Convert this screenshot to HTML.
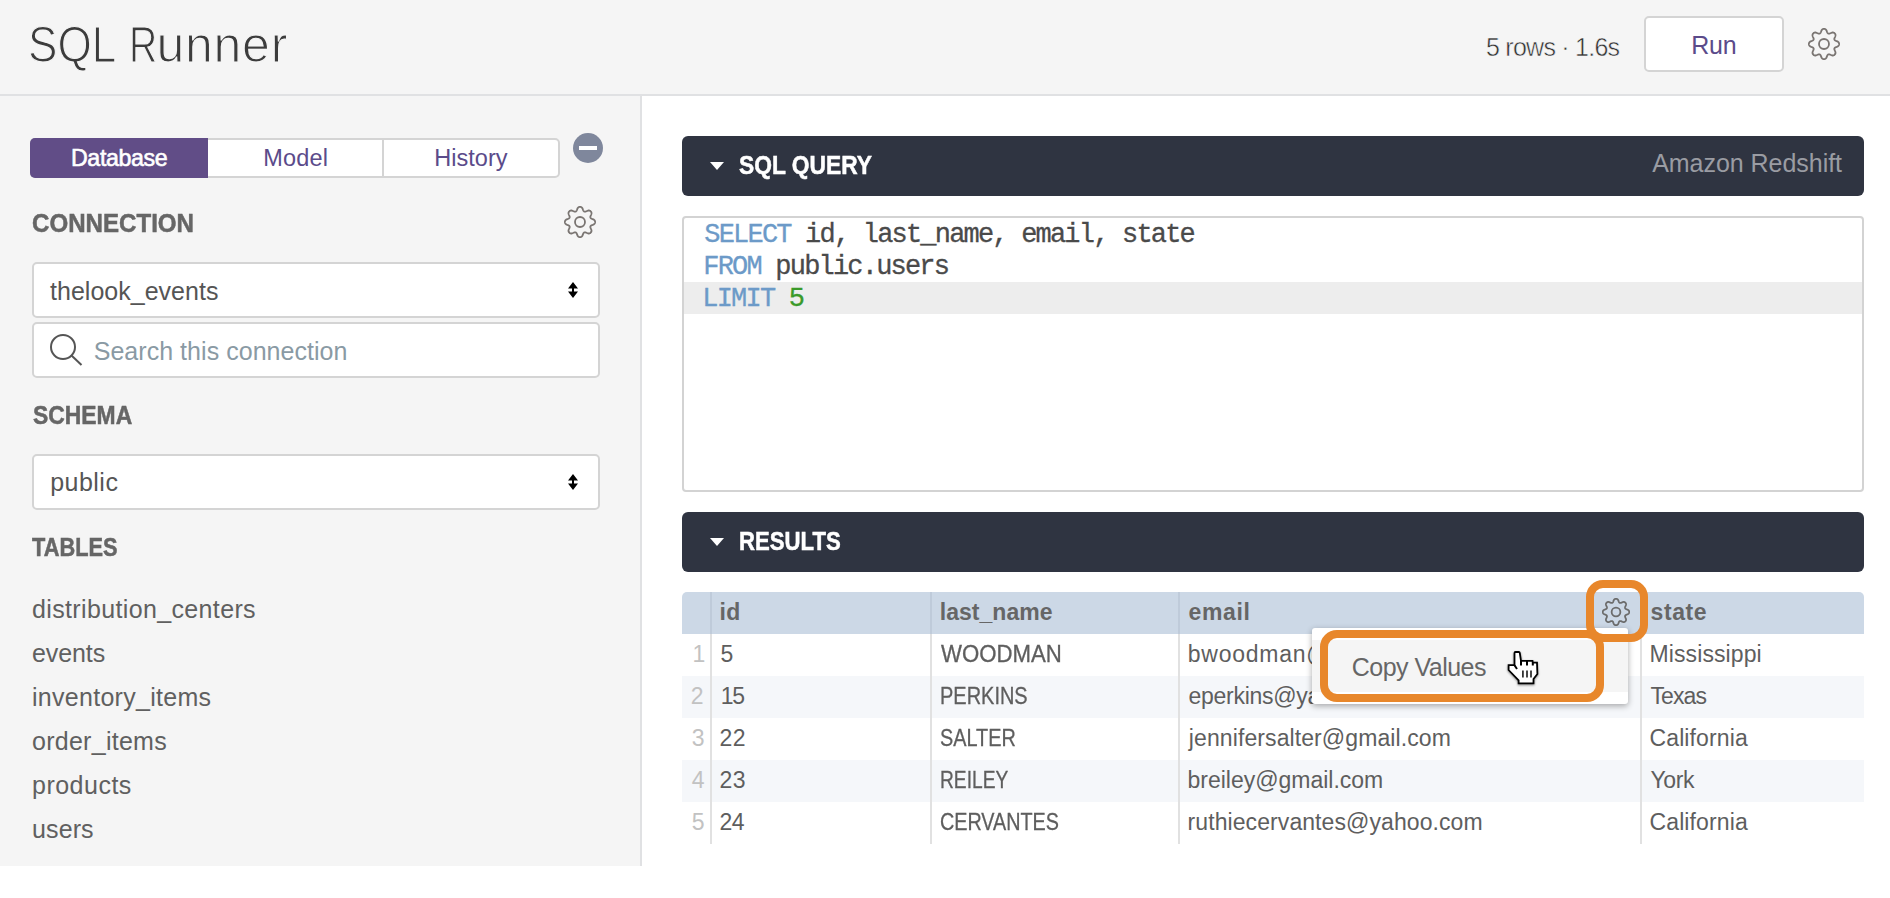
<!DOCTYPE html>
<html>
<head>
<meta charset="utf-8">
<title>SQL Runner</title>
<style>
*{box-sizing:border-box;margin:0;padding:0}
html,body{width:1890px;height:898px;overflow:hidden;background:#fff}
body{font-family:"Liberation Sans",sans-serif;color:#555;position:relative}
.abs{position:absolute}
.t{position:absolute;white-space:nowrap;line-height:1}
#hdr{left:0;top:0;width:1890px;height:96px;background:#f5f5f5;border-bottom:2px solid #e0e1e3}
#side{left:0;top:96px;width:642px;height:770px;background:#f5f5f5;border-right:2px solid #e0e1e3}
.box{position:absolute;background:#fff;border:2px solid #d4d4d4;border-radius:5px}
.bar{position:absolute;left:682px;width:1182px;height:60px;background:#2f3441;border-radius:6px}
.tri{position:absolute;left:28px;width:0;height:0;border-left:7px solid transparent;border-right:7px solid transparent;border-top:8px solid #fff}
.row{position:absolute;left:682px;width:1182px;height:42px}
.sep{position:absolute;top:634px;width:2px;height:210px;background:#e1e1e1}
.seph{position:absolute;top:592px;width:2px;height:42px;background:#bfcbda}
.kw{color:#6c9ac8}
.nm{color:#3a9a2a}
</style>
</head>
<body>

<!-- HEADER -->
<div id="hdr" class="abs"></div>
<div class="box" style="left:1644px;top:16px;width:140px;height:56px"></div>
<svg class="abs gear" style="left:1808px;top:28px" width="32" height="32" viewBox="0 0 32 32"><g fill="none" stroke="#7a7572" stroke-width="1.8" stroke-linejoin="round"><path d="M16.00 0.90 L16.37 0.92 L16.74 0.98 L17.10 1.09 L17.45 1.26 L17.79 1.51 L18.10 1.84 L18.38 2.27 L18.63 2.77 L18.85 3.32 L19.04 3.85 L19.23 4.32 L19.42 4.71 L19.63 5.02 L19.85 5.25 L20.08 5.43 L20.32 5.56 L20.59 5.64 L20.88 5.68 L21.20 5.67 L21.56 5.59 L21.97 5.46 L22.44 5.26 L22.95 5.02 L23.49 4.79 L24.03 4.60 L24.53 4.50 L24.99 4.49 L25.40 4.55 L25.76 4.68 L26.10 4.86 L26.40 5.07 L26.68 5.32 L26.93 5.60 L27.14 5.90 L27.32 6.24 L27.45 6.60 L27.51 7.01 L27.50 7.47 L27.40 7.97 L27.21 8.51 L26.98 9.05 L26.74 9.56 L26.54 10.03 L26.41 10.44 L26.33 10.80 L26.32 11.12 L26.36 11.41 L26.44 11.68 L26.57 11.92 L26.75 12.15 L26.98 12.37 L27.29 12.58 L27.68 12.77 L28.15 12.96 L28.68 13.15 L29.23 13.37 L29.73 13.62 L30.16 13.90 L30.49 14.21 L30.74 14.55 L30.91 14.90 L31.02 15.26 L31.08 15.63 L31.10 16.00 L31.08 16.37 L31.02 16.74 L30.91 17.10 L30.74 17.45 L30.49 17.79 L30.16 18.10 L29.73 18.38 L29.23 18.63 L28.68 18.85 L28.15 19.04 L27.68 19.23 L27.29 19.42 L26.98 19.63 L26.75 19.85 L26.57 20.08 L26.44 20.32 L26.36 20.59 L26.32 20.88 L26.33 21.20 L26.41 21.56 L26.54 21.97 L26.74 22.44 L26.98 22.95 L27.21 23.49 L27.40 24.03 L27.50 24.53 L27.51 24.99 L27.45 25.40 L27.32 25.76 L27.14 26.10 L26.93 26.40 L26.68 26.68 L26.40 26.93 L26.10 27.14 L25.76 27.32 L25.40 27.45 L24.99 27.51 L24.53 27.50 L24.03 27.40 L23.49 27.21 L22.95 26.98 L22.44 26.74 L21.97 26.54 L21.56 26.41 L21.20 26.33 L20.88 26.32 L20.59 26.36 L20.32 26.44 L20.08 26.57 L19.85 26.75 L19.63 26.98 L19.42 27.29 L19.23 27.68 L19.04 28.15 L18.85 28.68 L18.63 29.23 L18.38 29.73 L18.10 30.16 L17.79 30.49 L17.45 30.74 L17.10 30.91 L16.74 31.02 L16.37 31.08 L16.00 31.10 L15.63 31.08 L15.26 31.02 L14.90 30.91 L14.55 30.74 L14.21 30.49 L13.90 30.16 L13.62 29.73 L13.37 29.23 L13.15 28.68 L12.96 28.15 L12.77 27.68 L12.58 27.29 L12.37 26.98 L12.15 26.75 L11.92 26.57 L11.68 26.44 L11.41 26.36 L11.12 26.32 L10.80 26.33 L10.44 26.41 L10.03 26.54 L9.56 26.74 L9.05 26.98 L8.51 27.21 L7.97 27.40 L7.47 27.50 L7.01 27.51 L6.60 27.45 L6.24 27.32 L5.90 27.14 L5.60 26.93 L5.32 26.68 L5.07 26.40 L4.86 26.10 L4.68 25.76 L4.55 25.40 L4.49 24.99 L4.50 24.53 L4.60 24.03 L4.79 23.49 L5.02 22.95 L5.26 22.44 L5.46 21.97 L5.59 21.56 L5.67 21.20 L5.68 20.88 L5.64 20.59 L5.56 20.32 L5.43 20.08 L5.25 19.85 L5.02 19.63 L4.71 19.42 L4.32 19.23 L3.85 19.04 L3.32 18.85 L2.77 18.63 L2.27 18.38 L1.84 18.10 L1.51 17.79 L1.26 17.45 L1.09 17.10 L0.98 16.74 L0.92 16.37 L0.90 16.00 L0.92 15.63 L0.98 15.26 L1.09 14.90 L1.26 14.55 L1.51 14.21 L1.84 13.90 L2.27 13.62 L2.77 13.37 L3.32 13.15 L3.85 12.96 L4.32 12.77 L4.71 12.58 L5.02 12.37 L5.25 12.15 L5.43 11.92 L5.56 11.68 L5.64 11.41 L5.68 11.12 L5.67 10.80 L5.59 10.44 L5.46 10.03 L5.26 9.56 L5.02 9.05 L4.79 8.51 L4.60 7.97 L4.50 7.47 L4.49 7.01 L4.55 6.60 L4.68 6.24 L4.86 5.90 L5.07 5.60 L5.32 5.32 L5.60 5.07 L5.90 4.86 L6.24 4.68 L6.60 4.55 L7.01 4.49 L7.47 4.50 L7.97 4.60 L8.51 4.79 L9.05 5.02 L9.56 5.26 L10.03 5.46 L10.44 5.59 L10.80 5.67 L11.12 5.68 L11.41 5.64 L11.68 5.56 L11.92 5.43 L12.15 5.25 L12.37 5.02 L12.58 4.71 L12.77 4.32 L12.96 3.85 L13.15 3.32 L13.37 2.77 L13.62 2.27 L13.90 1.84 L14.21 1.51 L14.55 1.26 L14.90 1.09 L15.26 0.98 L15.63 0.92 Z"/><circle cx="16" cy="16" r="5"/></g></svg>

<!-- SIDEBAR -->
<div id="side" class="abs"></div>
<div class="box" style="left:30px;top:138px;width:530px;height:40px"></div>
<div class="abs" style="left:30px;top:138px;width:178px;height:40px;background:#614d87;border-radius:5px 0 0 5px"></div>
<div class="abs" style="left:382px;top:140px;width:2px;height:36px;background:#d4d4d4"></div>
<div class="abs" style="left:573px;top:133px;width:30px;height:30px;border-radius:50%;background:#7f879c"></div>
<div class="abs" style="left:579px;top:146px;width:18px;height:4px;background:#fff"></div>
<svg class="abs gear" style="left:564px;top:206px" width="32" height="32" viewBox="0 0 32 32"><g fill="none" stroke="#7a7572" stroke-width="1.8" stroke-linejoin="round"><path d="M16.00 0.90 L16.37 0.92 L16.74 0.98 L17.10 1.09 L17.45 1.26 L17.79 1.51 L18.10 1.84 L18.38 2.27 L18.63 2.77 L18.85 3.32 L19.04 3.85 L19.23 4.32 L19.42 4.71 L19.63 5.02 L19.85 5.25 L20.08 5.43 L20.32 5.56 L20.59 5.64 L20.88 5.68 L21.20 5.67 L21.56 5.59 L21.97 5.46 L22.44 5.26 L22.95 5.02 L23.49 4.79 L24.03 4.60 L24.53 4.50 L24.99 4.49 L25.40 4.55 L25.76 4.68 L26.10 4.86 L26.40 5.07 L26.68 5.32 L26.93 5.60 L27.14 5.90 L27.32 6.24 L27.45 6.60 L27.51 7.01 L27.50 7.47 L27.40 7.97 L27.21 8.51 L26.98 9.05 L26.74 9.56 L26.54 10.03 L26.41 10.44 L26.33 10.80 L26.32 11.12 L26.36 11.41 L26.44 11.68 L26.57 11.92 L26.75 12.15 L26.98 12.37 L27.29 12.58 L27.68 12.77 L28.15 12.96 L28.68 13.15 L29.23 13.37 L29.73 13.62 L30.16 13.90 L30.49 14.21 L30.74 14.55 L30.91 14.90 L31.02 15.26 L31.08 15.63 L31.10 16.00 L31.08 16.37 L31.02 16.74 L30.91 17.10 L30.74 17.45 L30.49 17.79 L30.16 18.10 L29.73 18.38 L29.23 18.63 L28.68 18.85 L28.15 19.04 L27.68 19.23 L27.29 19.42 L26.98 19.63 L26.75 19.85 L26.57 20.08 L26.44 20.32 L26.36 20.59 L26.32 20.88 L26.33 21.20 L26.41 21.56 L26.54 21.97 L26.74 22.44 L26.98 22.95 L27.21 23.49 L27.40 24.03 L27.50 24.53 L27.51 24.99 L27.45 25.40 L27.32 25.76 L27.14 26.10 L26.93 26.40 L26.68 26.68 L26.40 26.93 L26.10 27.14 L25.76 27.32 L25.40 27.45 L24.99 27.51 L24.53 27.50 L24.03 27.40 L23.49 27.21 L22.95 26.98 L22.44 26.74 L21.97 26.54 L21.56 26.41 L21.20 26.33 L20.88 26.32 L20.59 26.36 L20.32 26.44 L20.08 26.57 L19.85 26.75 L19.63 26.98 L19.42 27.29 L19.23 27.68 L19.04 28.15 L18.85 28.68 L18.63 29.23 L18.38 29.73 L18.10 30.16 L17.79 30.49 L17.45 30.74 L17.10 30.91 L16.74 31.02 L16.37 31.08 L16.00 31.10 L15.63 31.08 L15.26 31.02 L14.90 30.91 L14.55 30.74 L14.21 30.49 L13.90 30.16 L13.62 29.73 L13.37 29.23 L13.15 28.68 L12.96 28.15 L12.77 27.68 L12.58 27.29 L12.37 26.98 L12.15 26.75 L11.92 26.57 L11.68 26.44 L11.41 26.36 L11.12 26.32 L10.80 26.33 L10.44 26.41 L10.03 26.54 L9.56 26.74 L9.05 26.98 L8.51 27.21 L7.97 27.40 L7.47 27.50 L7.01 27.51 L6.60 27.45 L6.24 27.32 L5.90 27.14 L5.60 26.93 L5.32 26.68 L5.07 26.40 L4.86 26.10 L4.68 25.76 L4.55 25.40 L4.49 24.99 L4.50 24.53 L4.60 24.03 L4.79 23.49 L5.02 22.95 L5.26 22.44 L5.46 21.97 L5.59 21.56 L5.67 21.20 L5.68 20.88 L5.64 20.59 L5.56 20.32 L5.43 20.08 L5.25 19.85 L5.02 19.63 L4.71 19.42 L4.32 19.23 L3.85 19.04 L3.32 18.85 L2.77 18.63 L2.27 18.38 L1.84 18.10 L1.51 17.79 L1.26 17.45 L1.09 17.10 L0.98 16.74 L0.92 16.37 L0.90 16.00 L0.92 15.63 L0.98 15.26 L1.09 14.90 L1.26 14.55 L1.51 14.21 L1.84 13.90 L2.27 13.62 L2.77 13.37 L3.32 13.15 L3.85 12.96 L4.32 12.77 L4.71 12.58 L5.02 12.37 L5.25 12.15 L5.43 11.92 L5.56 11.68 L5.64 11.41 L5.68 11.12 L5.67 10.80 L5.59 10.44 L5.46 10.03 L5.26 9.56 L5.02 9.05 L4.79 8.51 L4.60 7.97 L4.50 7.47 L4.49 7.01 L4.55 6.60 L4.68 6.24 L4.86 5.90 L5.07 5.60 L5.32 5.32 L5.60 5.07 L5.90 4.86 L6.24 4.68 L6.60 4.55 L7.01 4.49 L7.47 4.50 L7.97 4.60 L8.51 4.79 L9.05 5.02 L9.56 5.26 L10.03 5.46 L10.44 5.59 L10.80 5.67 L11.12 5.68 L11.41 5.64 L11.68 5.56 L11.92 5.43 L12.15 5.25 L12.37 5.02 L12.58 4.71 L12.77 4.32 L12.96 3.85 L13.15 3.32 L13.37 2.77 L13.62 2.27 L13.90 1.84 L14.21 1.51 L14.55 1.26 L14.90 1.09 L15.26 0.98 L15.63 0.92 Z"/><circle cx="16" cy="16" r="5"/></g></svg>

<div class="box" style="left:32px;top:262px;width:568px;height:56px"></div>
<svg class="abs" style="left:568px;top:282px" width="10" height="16" viewBox="0 0 10 16"><path d="M5 0 L10 6.5 L6 6.5 L6 9.5 L10 9.5 L5 16 L0 9.5 L4 9.5 L4 6.5 L0 6.5 Z" fill="#000"/></svg>
<div class="box" style="left:32px;top:322px;width:568px;height:56px"></div>
<svg class="abs" style="left:48px;top:332px" width="36" height="36" viewBox="0 0 36 36"><circle cx="15" cy="15" r="12" fill="none" stroke="#555" stroke-width="2"/><path d="M23.5 23.5 L33.5 33" stroke="#555" stroke-width="2" fill="none"/></svg>
<div class="box" style="left:32px;top:454px;width:568px;height:56px"></div>
<svg class="abs" style="left:568px;top:474px" width="10" height="16" viewBox="0 0 10 16"><path d="M5 0 L10 6.5 L6 6.5 L6 9.5 L10 9.5 L5 16 L0 9.5 L4 9.5 L4 6.5 L0 6.5 Z" fill="#000"/></svg>

<!-- MAIN -->
<div class="bar" style="top:136px"><div class="tri" style="top:26px"></div></div>
<div class="box" style="left:682px;top:216px;width:1182px;height:276px;border-color:#d3d3d3;border-radius:4px"></div>
<div class="abs" style="left:684px;top:282px;width:1178px;height:32px;background:#ededed"></div>
<div class="bar" style="top:512px"><div class="tri" style="top:26px"></div></div>

<!-- TABLE -->
<div class="row" style="top:592px;background:#ccd8e6;border-radius:5px 5px 0 0"></div>
<div class="row" style="top:676px;background:#f5f7fa"></div>
<div class="row" style="top:760px;background:#f5f7fa"></div>
<div class="sep" style="left:710px"></div><div class="seph" style="left:710px"></div>
<div class="sep" style="left:930px"></div><div class="seph" style="left:930px"></div>
<div class="sep" style="left:1178px"></div><div class="seph" style="left:1178px"></div>
<div class="sep" style="left:1640px"></div><div class="seph" style="left:1640px"></div>
<svg class="abs gear" style="left:1602px;top:598px" width="28" height="28" viewBox="0 0 32 32"><g fill="none" stroke="#6c6c6c" stroke-width="2.05" stroke-linejoin="round"><path d="M16.00 0.90 L16.37 0.92 L16.74 0.98 L17.10 1.09 L17.45 1.26 L17.79 1.51 L18.10 1.84 L18.38 2.27 L18.63 2.77 L18.85 3.32 L19.04 3.85 L19.23 4.32 L19.42 4.71 L19.63 5.02 L19.85 5.25 L20.08 5.43 L20.32 5.56 L20.59 5.64 L20.88 5.68 L21.20 5.67 L21.56 5.59 L21.97 5.46 L22.44 5.26 L22.95 5.02 L23.49 4.79 L24.03 4.60 L24.53 4.50 L24.99 4.49 L25.40 4.55 L25.76 4.68 L26.10 4.86 L26.40 5.07 L26.68 5.32 L26.93 5.60 L27.14 5.90 L27.32 6.24 L27.45 6.60 L27.51 7.01 L27.50 7.47 L27.40 7.97 L27.21 8.51 L26.98 9.05 L26.74 9.56 L26.54 10.03 L26.41 10.44 L26.33 10.80 L26.32 11.12 L26.36 11.41 L26.44 11.68 L26.57 11.92 L26.75 12.15 L26.98 12.37 L27.29 12.58 L27.68 12.77 L28.15 12.96 L28.68 13.15 L29.23 13.37 L29.73 13.62 L30.16 13.90 L30.49 14.21 L30.74 14.55 L30.91 14.90 L31.02 15.26 L31.08 15.63 L31.10 16.00 L31.08 16.37 L31.02 16.74 L30.91 17.10 L30.74 17.45 L30.49 17.79 L30.16 18.10 L29.73 18.38 L29.23 18.63 L28.68 18.85 L28.15 19.04 L27.68 19.23 L27.29 19.42 L26.98 19.63 L26.75 19.85 L26.57 20.08 L26.44 20.32 L26.36 20.59 L26.32 20.88 L26.33 21.20 L26.41 21.56 L26.54 21.97 L26.74 22.44 L26.98 22.95 L27.21 23.49 L27.40 24.03 L27.50 24.53 L27.51 24.99 L27.45 25.40 L27.32 25.76 L27.14 26.10 L26.93 26.40 L26.68 26.68 L26.40 26.93 L26.10 27.14 L25.76 27.32 L25.40 27.45 L24.99 27.51 L24.53 27.50 L24.03 27.40 L23.49 27.21 L22.95 26.98 L22.44 26.74 L21.97 26.54 L21.56 26.41 L21.20 26.33 L20.88 26.32 L20.59 26.36 L20.32 26.44 L20.08 26.57 L19.85 26.75 L19.63 26.98 L19.42 27.29 L19.23 27.68 L19.04 28.15 L18.85 28.68 L18.63 29.23 L18.38 29.73 L18.10 30.16 L17.79 30.49 L17.45 30.74 L17.10 30.91 L16.74 31.02 L16.37 31.08 L16.00 31.10 L15.63 31.08 L15.26 31.02 L14.90 30.91 L14.55 30.74 L14.21 30.49 L13.90 30.16 L13.62 29.73 L13.37 29.23 L13.15 28.68 L12.96 28.15 L12.77 27.68 L12.58 27.29 L12.37 26.98 L12.15 26.75 L11.92 26.57 L11.68 26.44 L11.41 26.36 L11.12 26.32 L10.80 26.33 L10.44 26.41 L10.03 26.54 L9.56 26.74 L9.05 26.98 L8.51 27.21 L7.97 27.40 L7.47 27.50 L7.01 27.51 L6.60 27.45 L6.24 27.32 L5.90 27.14 L5.60 26.93 L5.32 26.68 L5.07 26.40 L4.86 26.10 L4.68 25.76 L4.55 25.40 L4.49 24.99 L4.50 24.53 L4.60 24.03 L4.79 23.49 L5.02 22.95 L5.26 22.44 L5.46 21.97 L5.59 21.56 L5.67 21.20 L5.68 20.88 L5.64 20.59 L5.56 20.32 L5.43 20.08 L5.25 19.85 L5.02 19.63 L4.71 19.42 L4.32 19.23 L3.85 19.04 L3.32 18.85 L2.77 18.63 L2.27 18.38 L1.84 18.10 L1.51 17.79 L1.26 17.45 L1.09 17.10 L0.98 16.74 L0.92 16.37 L0.90 16.00 L0.92 15.63 L0.98 15.26 L1.09 14.90 L1.26 14.55 L1.51 14.21 L1.84 13.90 L2.27 13.62 L2.77 13.37 L3.32 13.15 L3.85 12.96 L4.32 12.77 L4.71 12.58 L5.02 12.37 L5.25 12.15 L5.43 11.92 L5.56 11.68 L5.64 11.41 L5.68 11.12 L5.67 10.80 L5.59 10.44 L5.46 10.03 L5.26 9.56 L5.02 9.05 L4.79 8.51 L4.60 7.97 L4.50 7.47 L4.49 7.01 L4.55 6.60 L4.68 6.24 L4.86 5.90 L5.07 5.60 L5.32 5.32 L5.60 5.07 L5.90 4.86 L6.24 4.68 L6.60 4.55 L7.01 4.49 L7.47 4.50 L7.97 4.60 L8.51 4.79 L9.05 5.02 L9.56 5.26 L10.03 5.46 L10.44 5.59 L10.80 5.67 L11.12 5.68 L11.41 5.64 L11.68 5.56 L11.92 5.43 L12.15 5.25 L12.37 5.02 L12.58 4.71 L12.77 4.32 L12.96 3.85 L13.15 3.32 L13.37 2.77 L13.62 2.27 L13.90 1.84 L14.21 1.51 L14.55 1.26 L14.90 1.09 L15.26 0.98 L15.63 0.92 Z"/><circle cx="16" cy="16" r="5"/></g></svg>

<div class="t" id="titleA" style="left:28.14px;top:20px;font-size:50px;color:#3c3c3c;letter-spacing:0.00px;transform:scaleX(0.8823);transform-origin:0 0;-webkit-text-stroke:1.2px #f5f5f5">SQL</div>
<div class="t" id="titleB" style="left:128.87px;top:20px;font-size:50px;color:#3c3c3c;letter-spacing:0.00px;transform:scaleX(0.7833);transform-origin:0 0;-webkit-text-stroke:1.2px #f5f5f5">R</div>
<div class="t" id="titleC" style="left:156.40px;top:20px;font-size:50px;color:#3c3c3c;letter-spacing:0.77px;-webkit-text-stroke:1.2px #f5f5f5">unner</div>
<div class="t" id="c1" style="left:704.30px;top:222px;font-size:27px;color:#4a4a4a;letter-spacing:-1.80px;-webkit-text-stroke:0.3px;white-space:pre;font-family:'Liberation Mono',monospace"><span class="kw">SELECT</span> id, last_name, email, state</div>
<div class="t" id="c2" style="left:703.30px;top:254px;font-size:27px;color:#4a4a4a;letter-spacing:-1.80px;-webkit-text-stroke:0.3px;white-space:pre;font-family:'Liberation Mono',monospace"><span class="kw">FROM</span> public.users</div>
<div class="t" id="c3" style="left:702.30px;top:286px;font-size:27px;color:#4a4a4a;letter-spacing:-1.80px;-webkit-text-stroke:0.3px;white-space:pre;font-family:'Liberation Mono',monospace"><span class="kw">LIMIT</span> <span class="nm">5</span></div>
<div class="t" id="rows" style="left:1486.00px;top:35px;font-size:25px;color:#303030;letter-spacing:-0.75px;-webkit-text-stroke:0.5px #f5f5f5">5 rows · 1.6s</div>
<div class="t" id="run" style="left:1691.20px;top:33px;font-size:25px;color:#5b4b8a;letter-spacing:-0.18px">Run</div>
<div class="t" id="tab1" style="left:71.00px;top:147px;font-size:23.2px;color:#ffffff;letter-spacing:-0.38px;-webkit-text-stroke:0.6px #fff">Database</div>
<div class="t" id="tab2" style="left:263.20px;top:147px;font-size:23.5px;color:#5b4b8a;letter-spacing:0.18px">Model</div>
<div class="t" id="tab3" style="left:434.30px;top:147px;font-size:23.5px;color:#5b4b8a;letter-spacing:0.02px">History</div>
<div class="t" id="s1" style="left:32.04px;top:211px;font-size:25px;color:#666666;letter-spacing:0.00px;font-weight:bold;transform:scaleX(0.9639);transform-origin:0 0;-webkit-text-stroke:0.5px #666">CONNECTION</div>
<div class="t" id="sel1" style="left:50.00px;top:279px;font-size:25px;color:#555555;letter-spacing:0.02px">thelook_events</div>
<div class="t" id="ph" style="left:93.70px;top:339px;font-size:25px;color:#8a9aa4;letter-spacing:0.04px">Search this connection</div>
<div class="t" id="s2" style="left:32.50px;top:403px;font-size:25px;color:#666666;letter-spacing:0.00px;font-weight:bold;transform:scaleX(0.9152);transform-origin:0 0;-webkit-text-stroke:0.5px #666">SCHEMA</div>
<div class="t" id="sel2" style="left:50.20px;top:470px;font-size:25px;color:#555555;letter-spacing:0.48px">public</div>
<div class="t" id="s3" style="left:32.00px;top:535px;font-size:25px;color:#666666;letter-spacing:0.00px;font-weight:bold;transform:scaleX(0.8710);transform-origin:0 0;-webkit-text-stroke:0.5px #666">TABLES</div>
<div class="t" id="t1" style="left:32.00px;top:597px;font-size:25px;color:#606060;letter-spacing:0.36px">distribution_centers</div>
<div class="t" id="t2" style="left:32.00px;top:641px;font-size:25px;color:#606060;letter-spacing:-0.09px">events</div>
<div class="t" id="t3" style="left:32.00px;top:685px;font-size:25px;color:#606060;letter-spacing:0.28px">inventory_items</div>
<div class="t" id="t4" style="left:32.00px;top:729px;font-size:25px;color:#606060;letter-spacing:0.27px">order_items</div>
<div class="t" id="t5" style="left:32.00px;top:773px;font-size:25px;color:#606060;letter-spacing:0.49px">products</div>
<div class="t" id="t6" style="left:32.00px;top:817px;font-size:25px;color:#606060;letter-spacing:0.12px">users</div>
<div class="t" id="b1" style="left:739.30px;top:153px;font-size:25px;color:#ffffff;letter-spacing:0.00px;font-weight:bold;transform:scaleX(0.9118);transform-origin:0 0;-webkit-text-stroke:0.5px #fff">SQL QUERY</div>
<div class="t" id="amz" style="left:1652.20px;top:151px;font-size:25px;color:#9a9ca3;letter-spacing:-0.04px">Amazon Redshift</div>
<div class="t" id="b2" style="left:738.91px;top:529px;font-size:25px;color:#ffffff;letter-spacing:0.00px;font-weight:bold;transform:scaleX(0.8856);transform-origin:0 0;-webkit-text-stroke:0.5px #fff">RESULTS</div>
<div class="t" id="h1" style="left:719.60px;top:601px;font-size:23px;color:#666666;letter-spacing:0.31px;font-weight:bold">id</div>
<div class="t" id="h2" style="left:939.80px;top:601px;font-size:23px;color:#666666;letter-spacing:0.02px;font-weight:bold">last_name</div>
<div class="t" id="h3" style="left:1188.60px;top:601px;font-size:23px;color:#666666;letter-spacing:0.62px;font-weight:bold">email</div>
<div class="t" id="h4" style="left:1650.50px;top:601px;font-size:23px;color:#666666;letter-spacing:0.60px;font-weight:bold">state</div>
<div class="t" id="r0c0" style="left:692.40px;top:643px;font-size:23px;color:#c2c2c2;letter-spacing:0.00px">1</div>
<div class="t" id="r0c1" style="left:720.60px;top:643px;font-size:23px;color:#5e5e5e;letter-spacing:0.00px">5</div>
<div class="t" id="r0c2" style="left:940.60px;top:643px;font-size:23px;color:#5e5e5e;letter-spacing:0.00px;transform:scaleX(0.9644);transform-origin:0 0;-webkit-text-stroke:0.3px">WOODMAN</div>
<div class="t" id="r0c3" style="left:1187.80px;top:643px;font-size:23px;color:#5e5e5e;letter-spacing:0.75px">bwoodman@gmail.com</div>
<div class="t" id="r0c4" style="left:1649.50px;top:643px;font-size:23px;color:#5e5e5e;letter-spacing:0.10px">Mississippi</div>
<div class="t" id="r1c0" style="left:690.70px;top:685px;font-size:23px;color:#c2c2c2;letter-spacing:0.00px">2</div>
<div class="t" id="r1c1" style="left:720.80px;top:685px;font-size:23px;color:#5e5e5e;letter-spacing:-1.29px">15</div>
<div class="t" id="r1c2" style="left:939.73px;top:685px;font-size:23px;color:#5e5e5e;letter-spacing:0.00px;transform:scaleX(0.8682);transform-origin:0 0;-webkit-text-stroke:0.3px">PERKINS</div>
<div class="t" id="r1c3" style="left:1188.60px;top:685px;font-size:23px;color:#5e5e5e;letter-spacing:-0.30px">eperkins@yahoo.com</div>
<div class="t" id="r1c4" style="left:1650.50px;top:685px;font-size:23px;color:#5e5e5e;letter-spacing:-0.90px">Texas</div>
<div class="t" id="r2c0" style="left:691.70px;top:727px;font-size:23px;color:#c2c2c2;letter-spacing:0.00px">3</div>
<div class="t" id="r2c1" style="left:719.60px;top:727px;font-size:23px;color:#5e5e5e;letter-spacing:0.41px">22</div>
<div class="t" id="r2c2" style="left:939.74px;top:727px;font-size:23px;color:#5e5e5e;letter-spacing:0.00px;transform:scaleX(0.8635);transform-origin:0 0;-webkit-text-stroke:0.3px">SALTER</div>
<div class="t" id="r2c3" style="left:1188.80px;top:727px;font-size:23px;color:#5e5e5e;letter-spacing:0.10px">jennifersalter@gmail.com</div>
<div class="t" id="r2c4" style="left:1649.50px;top:727px;font-size:23px;color:#5e5e5e;letter-spacing:0.12px">California</div>
<div class="t" id="r3c0" style="left:691.70px;top:769px;font-size:23px;color:#c2c2c2;letter-spacing:0.00px">4</div>
<div class="t" id="r3c1" style="left:719.60px;top:769px;font-size:23px;color:#5e5e5e;letter-spacing:0.41px">23</div>
<div class="t" id="r3c2" style="left:939.77px;top:769px;font-size:23px;color:#5e5e5e;letter-spacing:0.00px;transform:scaleX(0.8338);transform-origin:0 0;-webkit-text-stroke:0.3px">REILEY</div>
<div class="t" id="r3c3" style="left:1187.60px;top:769px;font-size:23px;color:#5e5e5e;letter-spacing:-0.02px">breiley@gmail.com</div>
<div class="t" id="r3c4" style="left:1650.50px;top:769px;font-size:23px;color:#5e5e5e;letter-spacing:-0.39px">York</div>
<div class="t" id="r4c0" style="left:691.70px;top:811px;font-size:23px;color:#c2c2c2;letter-spacing:0.00px">5</div>
<div class="t" id="r4c1" style="left:719.60px;top:811px;font-size:23px;color:#5e5e5e;letter-spacing:-0.59px">24</div>
<div class="t" id="r4c2" style="left:939.74px;top:811px;font-size:23px;color:#5e5e5e;letter-spacing:0.00px;transform:scaleX(0.8591);transform-origin:0 0;-webkit-text-stroke:0.3px">CERVANTES</div>
<div class="t" id="r4c3" style="left:1187.60px;top:811px;font-size:23px;color:#5e5e5e;letter-spacing:0.08px">ruthiecervantes@yahoo.com</div>
<div class="t" id="r4c4" style="left:1649.50px;top:811px;font-size:23px;color:#5e5e5e;letter-spacing:0.12px">California</div>

<!-- POPUP BG -->
<div class="abs" style="left:1312px;top:628px;width:316px;height:76px;background:#fff;border-radius:3px;box-shadow:0 2px 6px rgba(0,0,0,.33)"></div>
<div class="abs" style="left:1312px;top:640px;width:316px;height:52px;background:#f5f5f5"></div>

<div class="t" id="cv" style="left:1351.70px;top:655px;font-size:25px;color:#666666;letter-spacing:-0.51px">Copy Values</div>

<!-- ANNOTATIONS -->
<div class="abs" style="left:1320px;top:630px;width:284px;height:72px;border:8px solid #e8872b;border-radius:17px"></div>
<div class="abs" style="left:1586px;top:580px;width:62px;height:62px;border:8px solid #e8872b;border-radius:17px"></div>
<svg class="abs" style="left:1496px;top:640px;filter:drop-shadow(0 1px 1px rgba(0,0,0,.45))" width="56" height="56" viewBox="0 0 56 56">
<path d="M18.5 13 Q18.5 12 19.5 12 L22.8 12 Q23.6 12 23.8 13 L25 20.8 L36.5 20.8 L36.8 22.6 L41 22.6 L41.4 34 L37.5 39 L37.5 43.3 L22.6 43.3 L22.6 40.4 L12.6 30 L12.6 25.2 L18.5 25.2 Z" fill="#fff" stroke="#000" stroke-width="1.8" stroke-linejoin="miter"/>
<path d="M18.5 25.2 L21 29 M25 20.8 L25 25.6 M31 20.8 L31 25.6 M36.8 22.6 L36.8 25.6" stroke="#000" stroke-width="2" fill="none"/>
<path d="M26.9 30.5 L26.9 37.4 M31 30.5 L31 37.4 M35 30.5 L35 37.4" stroke="#333" stroke-width="1.8" fill="none"/>
</svg>

</body>
</html>
